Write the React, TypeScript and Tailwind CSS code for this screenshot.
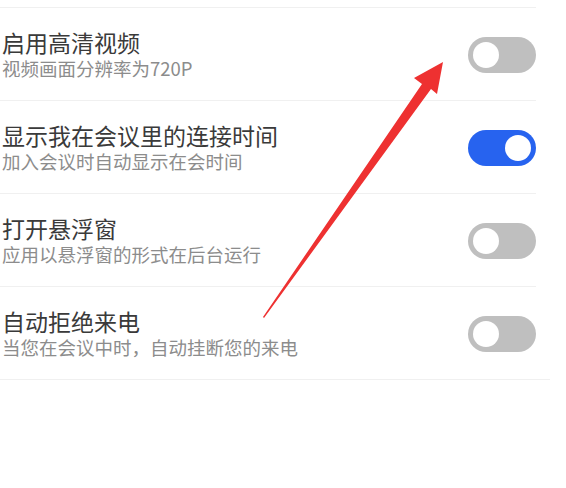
import React from "react";

type Item = { title: string; desc: string; on: boolean };

const items: Item[] = [
  { title: "启用高清视频", desc: "视频画面分辨率为720P", on: false },
  { title: "显示我在会议里的连接时间", desc: "加入会议时自动显示在会时间", on: true },
  { title: "打开悬浮窗", desc: "应用以悬浮窗的形式在后台运行", on: false },
  { title: "自动拒绝来电", desc: "当您在会议中时，自动挂断您的来电", on: false },
];

const Toggle = ({ on }: { on: boolean }) => (
  <div
    className={
      on
        ? "w-[68px] h-[36px] rounded-full bg-[#2763ef] flex items-center justify-end pr-[5px] shrink-0"
        : "w-[68px] h-[36px] rounded-full bg-[#bfbfbf] flex items-center justify-start pl-[5px] shrink-0"
    }
  >
    <div className="w-[26px] h-[26px] rounded-full bg-white" />
  </div>
);

export default function App() {
  return (
    <div
      className="relative w-[566px] h-[488px] bg-white overflow-hidden"
      style={{ fontFamily: '"Noto Sans CJK SC", "Noto Sans", sans-serif' }}
    >
      <div className="pt-[7px] w-[536px]">
        {items.map((it, i) => (
          <div
            key={i}
            className="flex items-center justify-between border-t border-[#f0f0f0] pt-[21px] pb-[20px]"
          >
            <div className="flex flex-col pl-[2px]">
              <span className="text-[23px] leading-[27px] text-[#3a3a3a]">{it.title}</span>
              <span className="text-[18.5px] leading-[24px] text-[#8c8c8c]">{it.desc}</span>
            </div>
            <Toggle on={it.on} />
          </div>
        ))}
      </div>
      <div className="w-[550px] border-t border-[#f0f0f0]" />

      {/* red annotation arrow */}
      <svg className="absolute left-0 top-0" width="566" height="488" viewBox="0 0 566 488">
        <polygon
          points="263,317 422,84 414,78 443,62 437,94 431,89 264,318"
          fill="#ee3131"
        />
      </svg>
    </div>
  );
}
